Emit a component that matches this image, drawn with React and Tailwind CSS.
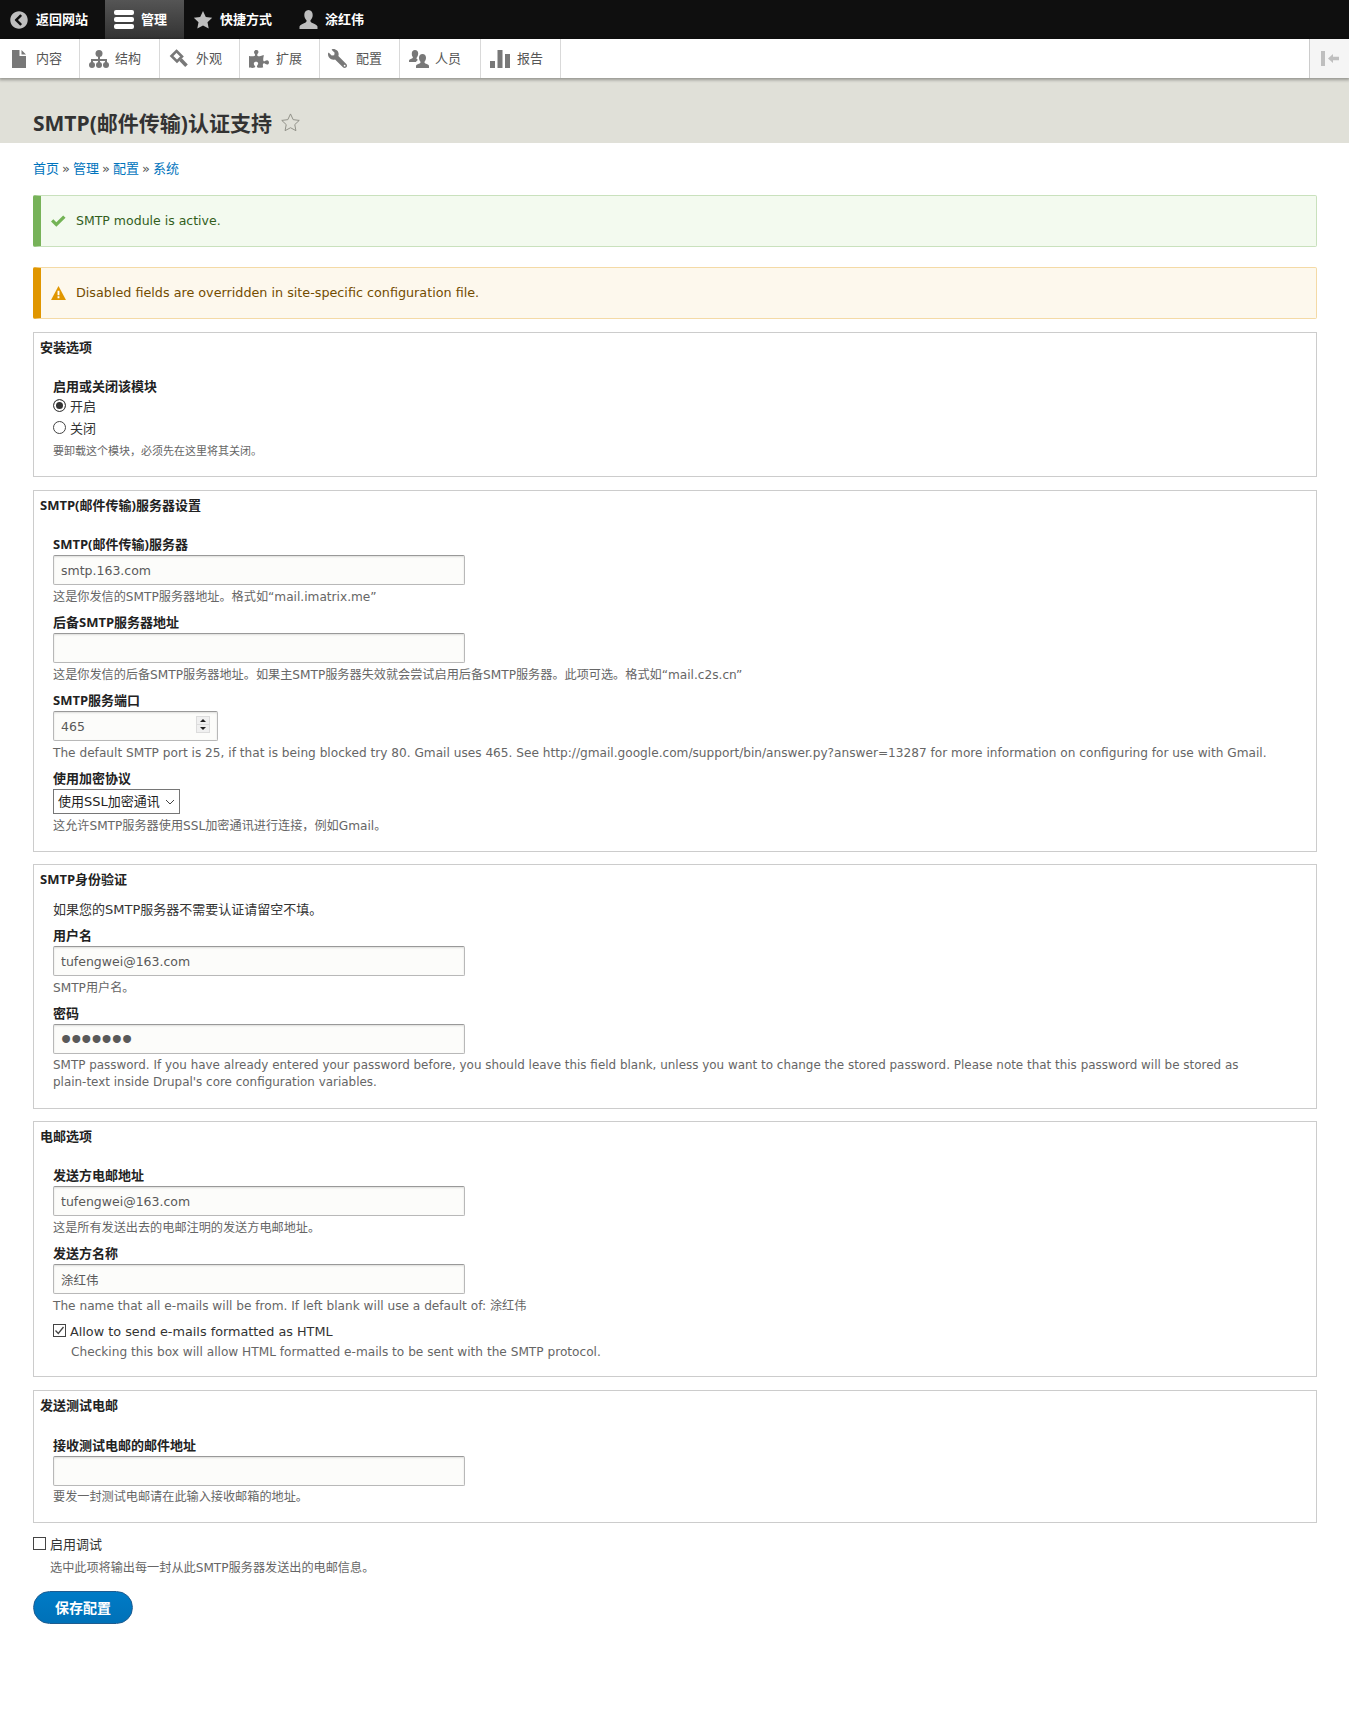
import { FaChevronCircleLeft, FaPuzzlePiece, FaWrench } from 'react-icons/fa'

const FONT = "font-['DejaVu_Sans','Noto_Sans_CJK_SC',sans-serif]"
const BOLD = "font-['Open_Sans','Noto_Sans_CJK_SC',sans-serif] font-bold"

function StarIcon({ className }) {
  return (
    <svg viewBox="0 0 20 20" className={className}>
      <path d="M10 1l2.800 6 6.400.8-4.700 4.400 1.200 6.400L10 15.500l-5.700 3.100 1.200-6.400L.8 7.800 7.200 7z" />
    </svg>
  )
}

function UserIcon({ className }) {
  return (
    <svg viewBox="0 0 18 20" className={className}>
      <path d="M9 0c2.800 0 4.200 2.200 4.200 5 0 2.300-1 4.200-2.200 5.300-.4 1.700.6 2.200 2.500 3 2.300 1 3.900 1.700 4.500 3.200V19H0v-2.500c.6-1.500 2.200-2.200 4.500-3.200 1.900-.8 2.900-1.300 2.500-3C5.800 9.200 4.800 7.300 4.800 5 4.800 2.200 6.200 0 9 0z" />
    </svg>
  )
}

function FileIcon() {
  return (
    <svg viewBox="0 0 14 18" className="w-[14px] h-[18px] fill-[#787878]">
      <path d="M0 0h7.500v6H14v12H0zM9.500 0L14 4.500H9.500z" />
    </svg>
  )
}

function SitemapIcon() {
  return (
    <svg viewBox="0 0 20 18" className="w-5 h-[18px] fill-[#787878]">
      <circle cx="10" cy="3.500" r="3.500" />
      <path d="M9 6h2v3h7v4h-2v-2h-5v2H9v-2H4v2H2V9h7z" />
      <circle cx="3" cy="15" r="3" />
      <circle cx="10" cy="15" r="3" />
      <circle cx="17" cy="15" r="3" />
    </svg>
  )
}

function HammerIcon() {
  return (
    <svg viewBox="0 0 20 19" className="w-5 h-[19px]">
      <path d="M7.500 2L13 7.500 8 12.500 2.500 7z" fill="#fff" stroke="#787878" strokeWidth="2.600" />
      <path d="M11.500 10.500L17.500 16.800" stroke="#787878" strokeWidth="3.600" />
    </svg>
  )
}

function PeopleIcon() {
  return (
    <svg viewBox="0 0 20 18" className="w-5 h-[18px] fill-[#787878]">
      <path d="M6 0c2 0 3.200 1.500 3.200 3.500S8 7.500 7.500 8c-.1 1 .5 1.300 1.500 1.700l-2 2V12H0v-1.500c.4-1 1.500-1.400 2.800-2 .8-.3 1.300-.7 1-1.500C3 6.200 2.800 4.800 2.800 3.500 2.800 1.500 4 0 6 0z" />
      <path d="M13.500 4c2.200 0 3.500 1.700 3.500 3.800 0 1.700-.7 3-1.500 3.900-.2 1.100.4 1.500 1.700 2 1.300.6 2.300 1 2.800 2V18H7v-2.300c.5-1 1.500-1.400 2.800-2 1.300-.5 1.900-.9 1.700-2-.8-.9-1.500-2.200-1.500-3.900C10 5.700 11.300 4 13.500 4z" />
    </svg>
  )
}

function BarsIcon() {
  return (
    <svg viewBox="0 0 20 18" className="w-5 h-[18px] fill-[#787878]">
      <path d="M0 11h5v7H0zM7.500 0h5v18h-5zM15 4h5v14h-5z" />
    </svg>
  )
}

const TRAY = [
  { label: '内容', icon: <FileIcon />, w: 'w-20', pl: 'pl-[12px]', gap: 'gap-[10px]' },
  { label: '结构', icon: <SitemapIcon />, w: 'w-20', pl: 'pl-[9px]', gap: 'gap-[6px]' },
  { label: '外观', icon: <HammerIcon />, w: 'w-20', pl: 'pl-[9px]', gap: 'gap-[7px]' },
  { label: '扩展', icon: <FaPuzzlePiece className="w-5 h-5 text-[#787878]" />, w: 'w-20', pl: 'pl-[9px]', gap: 'gap-[7px]' },
  { label: '配置', icon: <FaWrench className="w-[19px] h-[19px] text-[#787878] -scale-x-100" />, w: 'w-20', pl: 'pl-[8px]', gap: 'gap-[9px]' },
  { label: '人员', icon: <PeopleIcon />, w: 'w-[81px]', pl: 'pl-[9px]', gap: 'gap-[6px]' },
  { label: '报告', icon: <BarsIcon />, w: 'w-20', pl: 'pl-[9px]', gap: 'gap-[7px]' },
]

function Toolbar() {
  return (
    <>
      <div className={`${BOLD} h-[39px] bg-[#0f0f0f] flex items-center text-white text-[13px]`}>
        <a className="w-[105px] h-full pl-[10px] flex items-center gap-[8px]">
          <FaChevronCircleLeft className="w-[18px] h-[18px] text-[#bebebe]" /> 返回网站
        </a>
        <a className="w-[79px] h-full pl-[9px] flex items-center gap-[7px] bg-gradient-to-b from-[#555555] to-[#333333]">
          <span className="w-5 flex flex-col gap-[2px]">
            <span className="h-[5px] rounded-[2px] bg-white" />
            <span className="h-[5px] rounded-[2px] bg-white" />
            <span className="h-[5px] rounded-[2px] bg-white" />
          </span>
          管理
        </a>
        <a className="w-[106px] h-full pl-[9px] flex items-center gap-[7px]">
          <StarIcon className="w-5 h-5 fill-[#bebebe]" /> 快捷方式
        </a>
        <a className="h-full pl-[9px] flex items-center gap-[7px]">
          <UserIcon className="w-[19px] h-[20px] fill-[#bebebe]" /> 涂红伟
        </a>
      </div>
      <div className="h-[39px] bg-white flex justify-between shadow-[0_1px_3px_1px_rgba(0,0,0,0.33)] relative text-[13px] text-[#565656]">
        <div className="flex">
          {TRAY.map((t) => (
            <a key={t.label} className={`${t.w} ${t.pl} ${t.gap} h-full flex items-center border-r border-[#d9d9d9]`}>
              {t.icon}
              {t.label}
            </a>
          ))}
        </div>
        <div className="w-10 bg-[#f5f5f5] border-l border-[#cccccc] flex items-center justify-center gap-[3px]">
          <span className="w-[4px] h-[15px] bg-[#bfbfbf]" />
          <svg viewBox="0 0 11 9" className="w-[11px] h-[9px] fill-[#bfbfbf]">
            <path d="M0 4.500L5 0v2.800h6v3.400H5V9z" />
          </svg>
        </div>
      </div>
    </>
  )
}

function Message({ type, children }) {
  const warn = type === 'warning'
  return (
    <div className={warn
      ? 'h-[52px] flex items-center gap-[10px] pl-[10px] rounded-[2px] border border-l-[8px] border-[#f4daa6] border-l-[#e09600] bg-[#fdf8ed] text-[#734c00] text-[12.75px]'
      : 'h-[52px] flex items-center gap-[10px] pl-[10px] rounded-[2px] border border-l-[8px] border-[#c9e1bd] border-l-[#77b259] bg-[#f3faef] text-[#325e1c] text-[12.5px]'}>
      {warn ? (
        <svg viewBox="0 0 16 15" className="w-[15px] h-[14px]">
          <path d="M8 0l8 15H0z" fill="#e09600" />
          <path d="M7 5h2v5H7zM7 11h2v2H7z" fill="#fff" />
        </svg>
      ) : (
        <svg viewBox="0 0 16 12" className="w-[15px] h-[12px] fill-[#73b355]">
          <path d="M0 6.500l2.500-2.500 3.200 3.200L13 0l2.500 2.500-9.800 9.500z" />
        </svg>
      )}
      {children}
    </div>
  )
}

function Fieldset({ legend, className, children }) {
  return (
    <section className={`border border-[#cccccc] px-[19px] ${className}`}>
      <h2 className={`${BOLD} -ml-[13px] h-5 leading-[18px] mt-[5px] text-[13px] text-[#222222]`}>{legend}</h2>
      {children}
    </section>
  )
}

function Label({ children }) {
  return <label className={`${BOLD} block h-5 leading-[18px] text-[13px] text-[#222222]`}>{children}</label>
}

function Desc({ children, size = 'text-[12.15px]', className = 'h-[23px] leading-[25px] mb-[5px]' }) {
  return <div className={`${size} text-[#666666] ${className}`}>{children}</div>
}

function Radio({ name, checked }) {
  return (
    <input
      type="radio"
      name={name}
      defaultChecked={checked}
      className="appearance-none m-0 -mt-[3px] w-[13px] h-[13px] rounded-full border border-[#444444] bg-white checked:bg-[#333333] checked:shadow-[inset_0_0_0_2px_#ffffff]"
    />
  )
}

function Checkbox({ checked }) {
  return (
    <span className="relative -mt-[3px] w-[13px] h-[13px] block">
      <input type="checkbox" defaultChecked={checked} className="appearance-none block m-0 w-[13px] h-[13px] border border-[#444444] bg-white" />
      {checked && (
        <svg viewBox="0 0 13 13" className="absolute inset-0 w-[13px] h-[13px] fill-none stroke-[#444444] stroke-[1.3]">
          <path d="M2.500 6.500l2.800 3L10.500 3" />
        </svg>
      )}
    </span>
  )
}

const INPUT = "block h-[30px] rounded-[2px] border border-[#b8b8b8] border-t-[#999999] bg-[#fcfcfa] shadow-[inset_0_1px_2px_rgba(0,0,0,0.125)] px-[7px] text-[#595959]"

function TextInput({ value, type = 'text' }) {
  return (
    <input
      type={type}
      defaultValue={value}
      readOnly
      className={`${INPUT} w-[412px] ${type === 'password' ? "font-['Liberation_Sans',sans-serif] text-[29px] leading-none" : 'text-[12.5px]'}`}
    />
  )
}

export default function App() {
  return (
    <div className={`${FONT} bg-white min-h-[1717px] text-[#222222]`}>
      <Toolbar />

      <header className="h-[65px] bg-[#e0e0d8] pt-[30px] pl-[33px] flex items-start">
        <h1 className={`${BOLD} text-[21px] leading-[30px] text-[#333333]`}>SMTP(邮件传输)认证支持</h1>
        <StarIcon className="ml-[9px] mt-[5px] w-[19px] h-[19px] fill-none stroke-[#8d8d85]" />
      </header>

      <main className="pr-[32px] pl-[33px]">
        <nav className="h-[52px] pt-[16px] leading-5 text-[13px] text-[#0074bd] flex gap-[3px]">
          <a>首页</a><span className="text-[#555555]">»</span>
          <a>管理</a><span className="text-[#555555]">»</span>
          <a>配置</a><span className="text-[#555555]">»</span>
          <a>系统</a>
        </nav>

        <Message type="status">SMTP module is active.</Message>
        <div className="mt-5">
          <Message type="warning">Disabled fields are overridden in site-specific configuration file.</Message>
        </div>

        <Fieldset legend="安装选项" className="mt-[13px] h-[145px]">
          <div className={`${BOLD} mt-[19px] h-5 leading-[18px] text-[13px]`}>启用或关闭该模块</div>
          <label className="flex items-center h-[20px] gap-[4px] text-[13px] text-[#333333]">
            <Radio name="on" checked /> 开启
          </label>
          <label className="flex items-center h-[22px] mt-[1px] gap-[4px] text-[13px] text-[#333333]">
            <Radio name="on" /> 关闭
          </label>
          <div className="text-[11px] leading-5 mt-[2px] text-[#666666]">要卸载这个模块，必须先在这里将其关闭。</div>
        </Fieldset>

        <Fieldset legend="SMTP(邮件传输)服务器设置" className="mt-[13px] h-[362px]">
          <div className="mt-[19px]">
            <Label>SMTP(邮件传输)服务器</Label>
            <TextInput value="smtp.163.com" />
            <Desc>这是你发信的SMTP服务器地址。格式如“mail.imatrix.me”</Desc>
            <Label>后备SMTP服务器地址</Label>
            <TextInput />
            <Desc>这是你发信的后备SMTP服务器地址。如果主SMTP服务器失效就会尝试启用后备SMTP服务器。此项可选。格式如“mail.c2s.cn”</Desc>
            <Label>SMTP服务端口</Label>
            <div className="relative w-[165px]">
              <input defaultValue="465" readOnly className={`${INPUT} w-[165px] text-[12.5px]`} />
              <div className="absolute right-[8px] top-[5px] w-[14px] h-[17px] bg-[#dcdcdc] flex flex-col gap-px p-px">
                <div className="flex-1 bg-[#f0f0f0] flex items-center justify-center">
                  <svg viewBox="0 0 6 3" className="w-[6px] h-[3px] fill-[#222222]"><path d="M3 0l3 3H0z" /></svg>
                </div>
                <div className="flex-1 bg-[#f0f0f0] flex items-center justify-center">
                  <svg viewBox="0 0 6 3" className="w-[6px] h-[3px] fill-[#222222]"><path d="M0 0h6L3 3z" /></svg>
                </div>
              </div>
            </div>
            <Desc>The default SMTP port is 25, if that is being blocked try 80. Gmail uses 465. See http://gmail.google.com/support/bin/answer.py?answer=13287 for more information on configuring for use with Gmail.</Desc>
            <Label>使用加密协议</Label>
            <div className="relative w-[127px]">
              <select className="block appearance-none w-[127px] h-[25px] border border-[#767676] text-[13px] text-[#222222] pl-[4px]">
                <option>使用SSL加密通讯</option>
              </select>
              <svg viewBox="0 0 10 6" className="absolute right-[5px] top-[10px] w-[10px] h-[6px] fill-none stroke-[#444444] pointer-events-none">
                <path d="M1 1l4 4 4-4" />
              </svg>
            </div>
            <Desc>这允许SMTP服务器使用SSL加密通讯进行连接，例如Gmail。</Desc>
          </div>
        </Fieldset>

        <Fieldset legend="SMTP身份验证" className="mt-[12px] h-[245px]">
          <div className="mt-[10px] h-5 leading-5 text-[13px] text-[#333333]">如果您的SMTP服务器不需要认证请留空不填。</div>
          <div className="mt-[6px]">
            <Label>用户名</Label>
            <TextInput value="tufengwei@163.com" />
            <Desc>SMTP用户名。</Desc>
            <Label>密码</Label>
            <TextInput type="password" value="1234567" />
            <Desc size="text-[11.95px]" className="pt-[2px] leading-[17px] mt-[1px]">
              SMTP password. If you have already entered your password before, you should leave this field blank, unless you want to change the stored password. Please note that this password will be stored as <span className="whitespace-nowrap">plain-text</span> inside Drupal's core configuration variables.
            </Desc>
          </div>
        </Fieldset>

        <Fieldset legend="电邮选项" className="mt-[12px] h-[256px]">
          <div className="mt-[19px]">
            <Label>发送方电邮地址</Label>
            <TextInput value="tufengwei@163.com" />
            <Desc>这是所有发送出去的电邮注明的发送方电邮地址。</Desc>
            <Label>发送方名称</Label>
            <TextInput value="涂红伟" />
            <Desc>The name that all e-mails will be from. If left blank will use a default of: 涂红伟</Desc>
            <label className="flex items-center h-5 mt-[5px] gap-[4px] text-[12.8px] text-[#333333]">
              <Checkbox checked /> Allow to send e-mails formatted as HTML
            </label>
            <Desc className="ml-[18px] h-5 leading-5">Checking this box will allow HTML formatted e-mails to be sent with the SMTP protocol.</Desc>
          </div>
        </Fieldset>

        <Fieldset legend="发送测试电邮" className="mt-[13px] h-[133px]">
          <div className="mt-[20px]">
            <Label>接收测试电邮的邮件地址</Label>
            <TextInput />
            <Desc className="h-[23px] leading-[23px]">要发一封测试电邮请在此输入接收邮箱的地址。</Desc>
          </div>
        </Fieldset>

        <label className="flex items-center h-5 mt-[12px] gap-[4px] text-[13px] text-[#333333]">
          <Checkbox /> 启用调试
        </label>
        <Desc className="ml-[17px] h-[22px] leading-[22px] mt-[2px]">选中此项将输出每一封从此SMTP服务器发送出的电邮信息。</Desc>

        <button className={`${BOLD} mt-[12px] w-[100px] h-[33px] rounded-[20px] bg-gradient-to-b from-[#007bc6] to-[#0071b8] border border-[#1e5c90] text-white text-[14px]`}>保存配置</button>
      </main>
    </div>
  )
}
